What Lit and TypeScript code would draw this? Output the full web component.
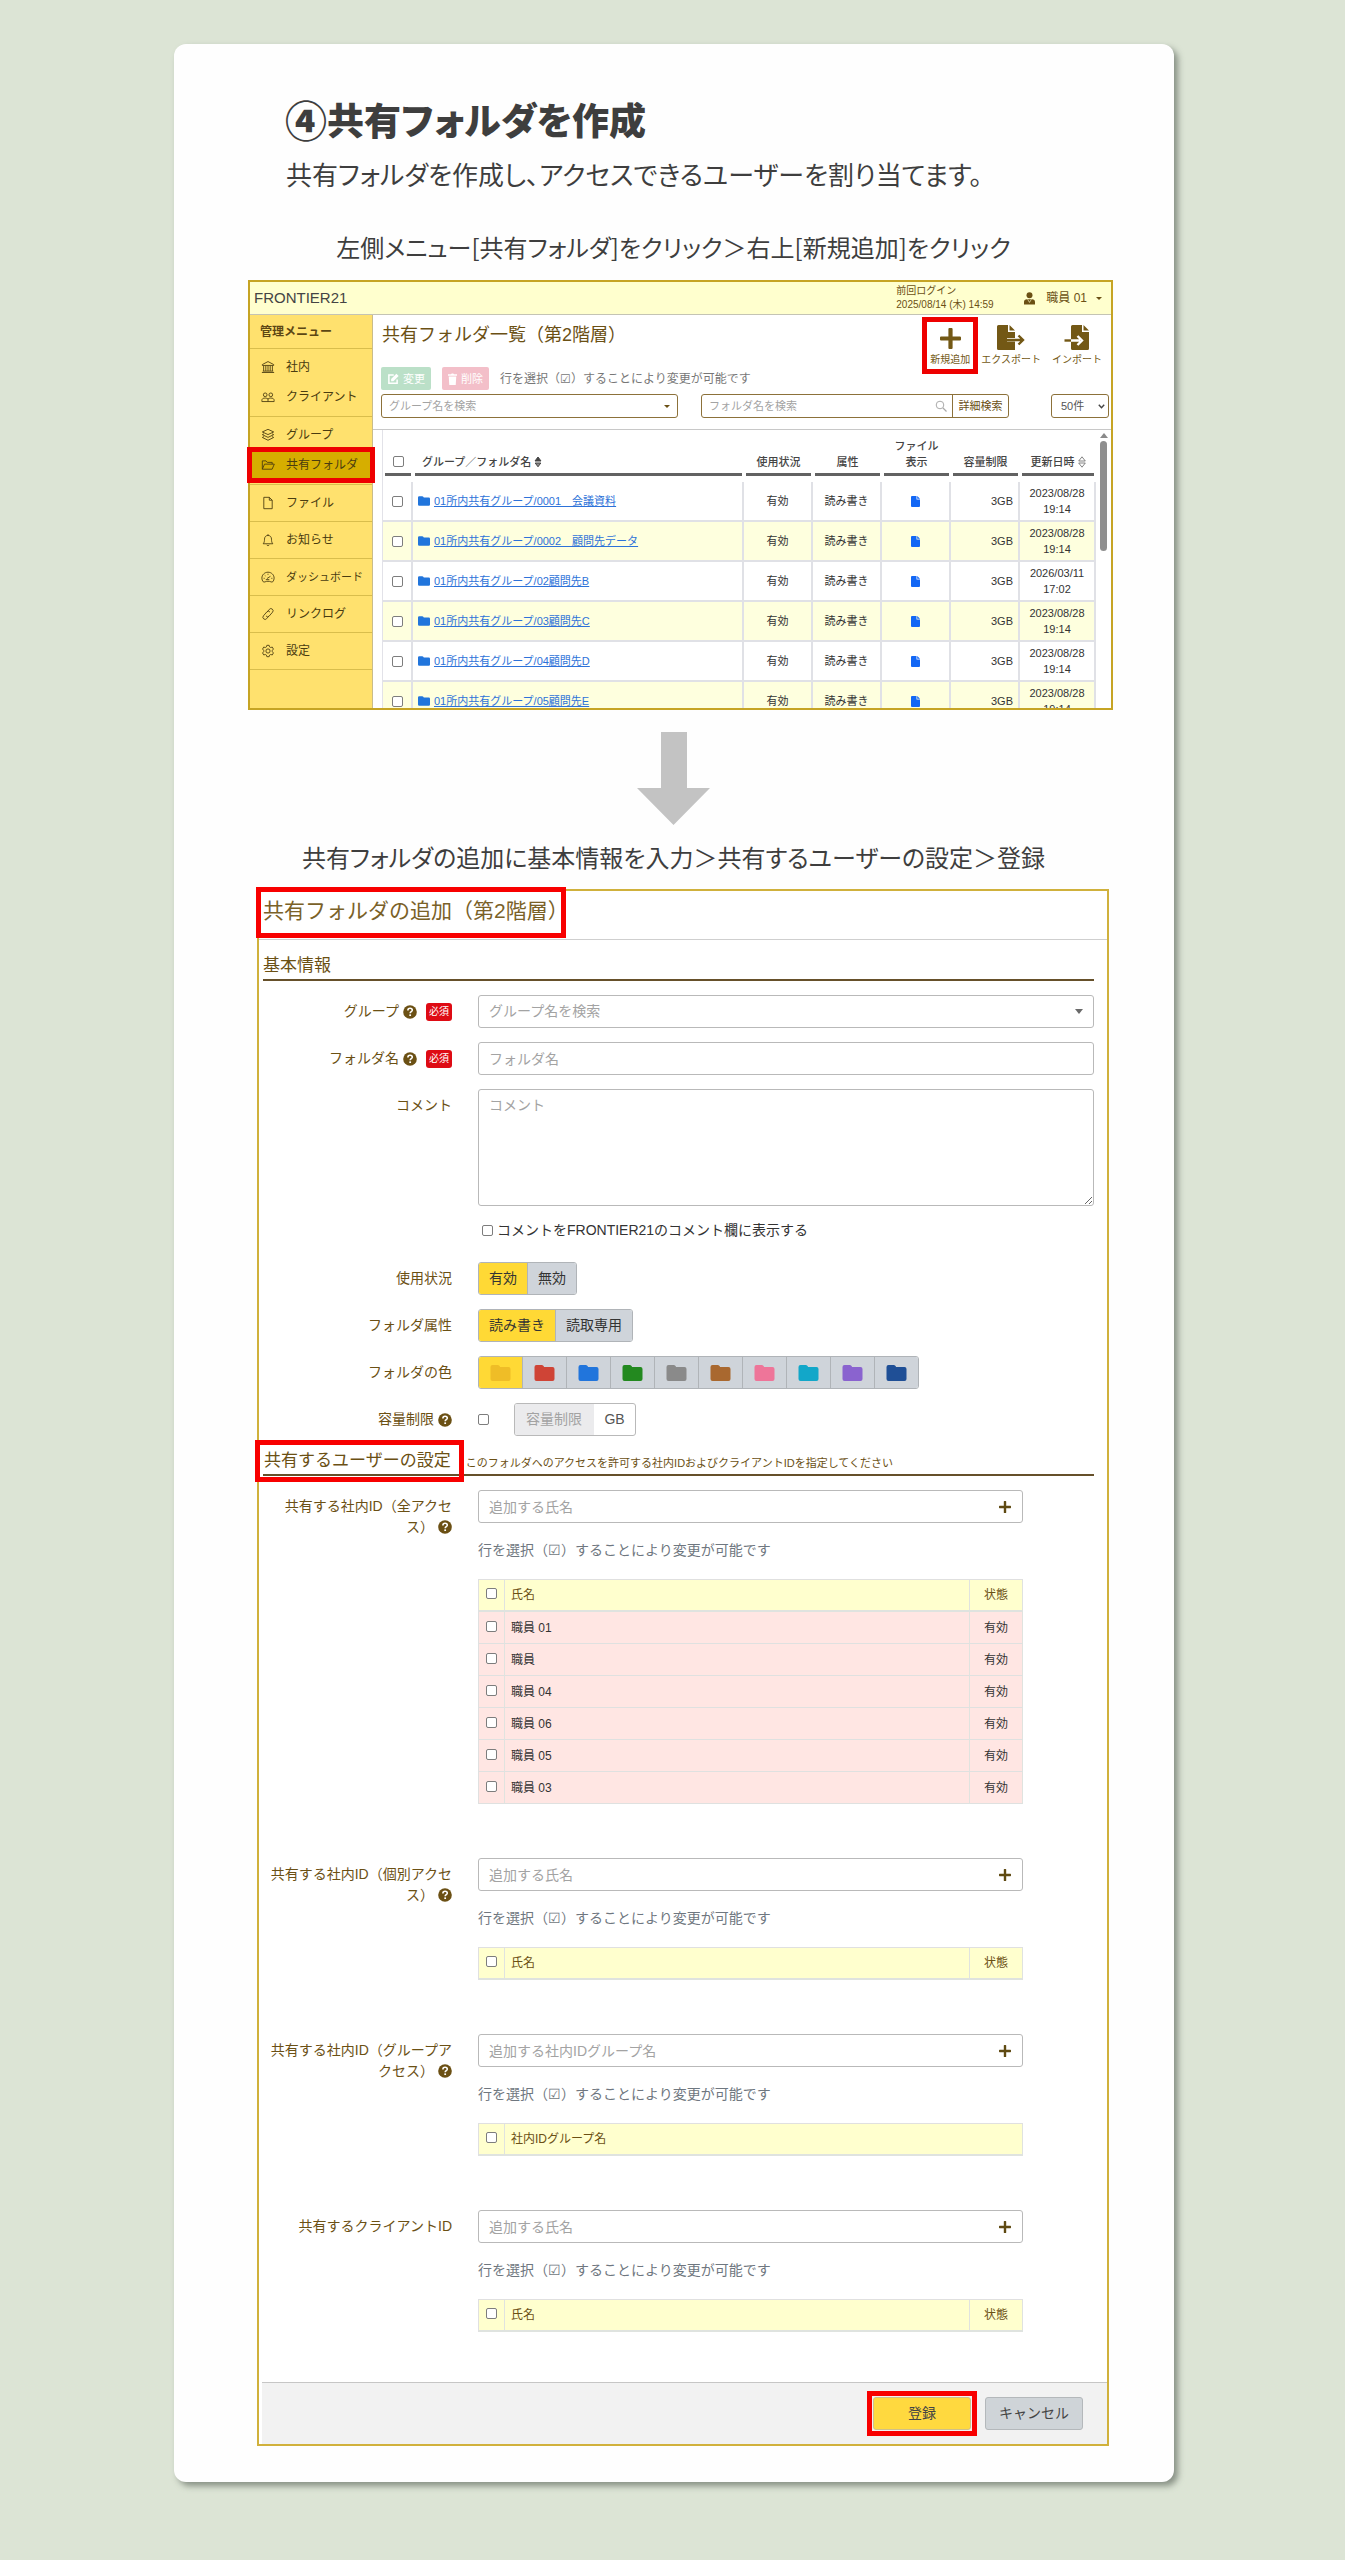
import { LitElement, html, css, svg, nothing } from "lit";
import { customElement, property } from "lit/decorators.js";

const stroke = (body: unknown) => html`<svg class="line-icon" viewBox="0 0 16 16" aria-hidden="true">${body}</svg>`;

const icons = {
  bank: stroke(svg`<path d="M1.5 5.2 8 1.8l6.500 3.400v1h-13zM3 6.500v6M5.500 6.500v6M10.500 6.500v6M13 6.500v6M8 6.500v6M2 12.700h12M1 14.300h14"/>`),
  people: stroke(svg`<circle cx="4.800" cy="5.500" r="2.100"/><circle cx="11.200" cy="5.500" r="2.100"/><path d="M1 13.200v-1.400c0-1.600 1.300-2.600 3.800-2.600 1.400 0 2.500.4 3.200 1.100.7-.7 1.800-1.100 3.200-1.100 2.500 0 3.800 1 3.800 2.600v1.400zM8 10.300v2.900"/>`),
  layers: stroke(svg`<path d="M8 1.500 14.500 4.500 8 7.500 1.500 4.500zM3.500 6.600l-2 1L8 10.700l6.500-3.100-2-1M3.500 9.800l-2 1L8 14l6.500-3.200-2-1"/>`),
  folder: stroke(svg`<path d="M1.500 12.800V3.300h4.200l1.500 1.700h5.600v2M1.500 12.800 4 7h11.200l-2.500 5.800z"/>`),
  file: stroke(svg`<path d="M3.200 1.500h6.300l3.300 3.300v9.700H3.200zM9.500 1.500v3.300h3.300"/>`),
  bell: stroke(svg`<path d="M2.500 12.300c1.200-1.300 1.500-3 1.500-5.300 0-2.400 1.500-4.200 4-4.200s4 1.800 4 4.200c0 2.300.3 4 1.500 5.300zM6.700 13.500c.2.700.7 1 1.300 1s1.100-.3 1.300-1M8 1.300v1.500"/>`),
  gauge: stroke(svg`<path d="M2.600 13.500C1.500 12.300 1 10.800 1 9.300 1 5.500 4.200 2.500 8 2.500s7 3 7 6.800c0 1.500-.5 3-1.600 4.200-.4.500-1.300.3-2.100 0-2-.8-4.600-.8-6.600 0-.8.3-1.700.5-2.100 0zM6.800 9.800l4-2.600M8 4.300v1.200M4.300 6l.8.700M3 9.500h1.200M11.800 9.500H13M5.500 11h4"/>`),
  link: stroke(svg`<path d="m7.200 5.400 2.300-2.700a2.400 2.400 0 0 1 3.700 3.200L9.400 10.300a2.400 2.400 0 0 1-3.600 0M8.800 10.600l-2.300 2.700a2.400 2.400 0 0 1-3.700-3.200l3.800-4.400a2.400 2.400 0 0 1 3.600 0"/>`),
  gear: stroke(svg`<circle cx="8" cy="8" r="2.400"/><path d="M6.700 1.500h2.600l.5 1.800 1.300.7 1.800-.5 1.300 2.300-1.300 1.400v1.600l1.300 1.400-1.300 2.300-1.800-.5-1.300.7-.5 1.800H6.700l-.5-1.800-1.300-.7-1.800.5-1.300-2.300 1.300-1.400V7.200L1.800 5.800l1.300-2.300 1.800.5 1.300-.7z"/>`),
};

const folderShape = html`<svg class="folder-shape" viewBox="0 0 20 16" aria-hidden="true"><path fill="currentColor" d="M2 0h5.200c.7 0 1.200.3 1.600.8l.9 1.300H18a2 2 0 0 1 2 2V14a2 2 0 0 1-2 2H2a2 2 0 0 1-2-2V2a2 2 0 0 1 2-2z"/></svg>`;
const plusShape = html`<svg class="plus" viewBox="0 0 20 20" aria-hidden="true"><path fill="currentColor" d="M8 1a1 1 0 0 1 1-1h2a1 1 0 0 1 1 1v7h7a1 1 0 0 1 1 1v2a1 1 0 0 1-1 1h-7v7a1 1 0 0 1-1 1H9a1 1 0 0 1-1-1v-7H1a1 1 0 0 1-1-1V9a1 1 0 0 1 1-1h7z"/></svg>`;
const helpShape = html`<svg class="help" viewBox="0 0 16 16" role="img" aria-label="ヘルプ"><circle cx="8" cy="8" r="7.800" fill="currentColor"/><path d="M5.600 6.200c0-1.500 1-2.400 2.500-2.400s2.500.9 2.500 2.200c0 1.700-2.400 1.700-2.400 3.500" fill="none" stroke="#fff" stroke-width="1.800"/><rect x="7.200" y="10.700" width="2" height="1.900" fill="#fff"/></svg>`;

const sidebarGroups = [
  [{ icon: icons.bank, text: "社内" }, { icon: icons.people, text: "クライアント" }],
  [{ icon: icons.layers, text: "グループ" }, { icon: icons.folder, text: "共有フォルダ", state: "current" }],
  [{ icon: icons.file, text: "ファイル" }],
  [{ icon: icons.bell, text: "お知らせ" }],
  [{ icon: icons.gauge, text: "ダッシュボード", state: "long" }],
  [{ icon: icons.link, text: "リンクログ" }],
  [{ icon: icons.gear, text: "設定" }],
] as { icon: unknown; text: string; state?: string }[][];

const folders = [
  { name: "01所内共有グループ/0001　会議資料", date: "2023/08/28", time: "19:14" },
  { name: "01所内共有グループ/0002　顧問先データ", date: "2023/08/28", time: "19:14" },
  { name: "01所内共有グループ/02顧問先B", date: "2026/03/11", time: "17:02" },
  { name: "01所内共有グループ/03顧問先C", date: "2023/08/28", time: "19:14" },
  { name: "01所内共有グループ/04顧問先D", date: "2023/08/28", time: "19:14" },
  { name: "01所内共有グループ/05顧問先E", date: "2023/08/28", time: "19:14" },
];

const folderColors = ["#efbd27", "#cf4436", "#2175dc", "#23891f", "#8a8a8a", "#a9682f", "#ee7599", "#12a7c9", "#8a63cf", "#1f4f96"];

const base = css`
  *, *::before, *::after { box-sizing: border-box; }
  :host { display: block; }
  h1, h2, h3, p, ul { margin: 0; padding: 0; font-weight: 400; }
  button, input, select, textarea { font: inherit; color: inherit; margin: 0; }
  button { padding: 0; border: 0; background: none; cursor: pointer; }
  svg { display: block; flex: none; }
  table { border-collapse: separate; border-spacing: 0; table-layout: fixed; width: 100%; }
  th { font-weight: 400; padding: 0; }
  td { padding: 0; }
  .check { appearance: none; display: block; width: 11px; height: 11px; border: 1px solid #7d7d7d; border-radius: 2px; background: #fff; flex: none; }
  .check:checked { background: #2175dc; }
  ::placeholder { color: #a3a3a3; opacity: 1; }
`;

@customElement("folder-list")
class FolderList extends LitElement {
  static styles = [base, css`
    :host { border: 2px solid #c6a424; background: #fff; font-size: 11px; line-height: 16px; color: #333; }
    .topbar { display: flex; align-items: center; height: 33px; padding: 0 9px 0 4px; background: #ffffce; border-bottom: 1px solid #c4c4b4; color: #6b5014; }
    .brand { flex: 1; font-size: 15px; color: #444; }
    .last-login { font-size: 10px; line-height: 14px; width: 128px; }
    .user { display: flex; align-items: center; font-size: 12px; gap: 11px; }
    .user-icon { width: 11px; height: 13px; }
    .caret { width: 0; border: 3px solid transparent; border-top-color: currentColor; border-bottom-width: 0; }
    .user .caret { margin-left: -2px; }
    .columns { display: flex; }
    .sidebar { width: 123px; flex: none; background: #ffe16e; border-right: 1px solid #c9bc8a; color: #4a3c10; font-size: 12px; }
    .menu-title { height: 34px; line-height: 35px; padding-left: 10px; font-size: 12px; font-weight: 700; border-bottom: 1px solid #d9bd4c; color: #5c4613; }
    .menu-group { list-style: none; border-bottom: 1px solid #d9bd4c; padding: 3px 0 4px; }
    .menu-group.single { padding: 3px 0; }
    .menu-item { display: flex; align-items: center; gap: 11px; height: 30px; padding-left: 11px; color: inherit; text-decoration: none; white-space: nowrap; }
    .menu-item.current { position: relative; z-index: 1; background: #d6ae00; outline: 5px solid #ee0000; outline-offset: -2px; }
    .menu-item.long { font-size: 11px; }
    .line-icon { width: 14px; height: 14px; fill: none; stroke: currentColor; stroke-width: 1; }
    .main { flex: 1; min-width: 0; }
    .head { padding: 0 2px 11px 8px; border-bottom: 1px solid #c8c8c8; }
    .head-top { display: flex; justify-content: space-between; height: 79px; }
    .title { font-size: 18px; line-height: 41px; color: #6b5014; padding-left: 1px; }
    .bulk { display: flex; align-items: center; margin-top: 11px; }
    .bulk-button { display: flex; align-items: center; gap: 4px; height: 23px; padding: 0 6px; border-radius: 2px; color: #fff; }
    .bulk-button svg { width: 12px; height: 12px; }
    .bulk-button .bin { width: 9px; }
    .edit { background: #bbe0c8; margin-right: 11px; }
    .delete { background: #f3bfc9; margin-right: 11px; }
    .hint { font-size: 12px; color: #777; }
    .actions { display: flex; align-items: flex-start; gap: 11px; padding: 10px 7px 0 0; color: #735815; }
    .action { display: flex; flex-direction: column; align-items: center; gap: 3px; font-size: 10px; line-height: 12px; white-space: nowrap; }
    .action-icon { display: flex; align-items: center; height: 26px; }
    .action-icon .plus { width: 21px; height: 21px; }
    .action-icon .doc { width: 28px; height: 26px; }
    .action.marked { outline: 5px solid #ee0000; outline-offset: 3px; }
    .filters { display: flex; gap: 23px; height: 24px; color: #6b5014; }
    .field { display: flex; min-width: 0; position: relative; align-items: center; border: 1px solid #8c713a; border-radius: 3px; background: #fff; }
    .field select, .field input { appearance: none; width: 100%; height: 22px; border: 0; background: none; padding: 0 7px; outline: 0; }
    .field .end { position: absolute; right: 7px; pointer-events: none; }
    .group-field { flex: 297 1 0; }
    .group-field select { color: #a3a3a3; }
    .search-field { flex: 308 1 0; }
    .search-icon { width: 12px; height: 12px; flex: none; color: #aaa; margin-right: 5px; }
    .detail { width: 56px; height: 22px; flex: none; border-left: 1px solid #8c713a; }
    .count-field { width: 58px; flex: none; margin-left: 19px; color: #555; }
    .count-field select { padding-left: 9px; }
    .count-field .end { right: 3px; width: 7px; height: 5px; }
    .scroll { display: flex; height: 278px; overflow: hidden; padding-left: 9px; }
    .table-box { flex: 1; min-width: 0; border-left: 1px solid #e2e2e8; }
    .c-check { width: 30px; }
    .c-mid { width: 69px; }
    .c-date { width: 76px; }
    .th-box { display: flex; align-items: flex-end; justify-content: center; height: 46px; margin: 0 2px 6px; padding-bottom: 3px; border-bottom: 3px solid #626262; font-weight: 500; color: #444; gap: 3px; }
    .th-box .check { margin-bottom: 3px; }
    .th-box.start { justify-content: flex-start; padding-left: 7px; }
    .sort { width: 8px; height: 12px; margin-bottom: 2px; }
    .row td { height: 40px; text-align: center; border-right: 2px solid #e0e1e6; border-bottom: 2px solid #e0e1e6; }
    .row:nth-child(even) td { background: #feffde; }
    .row .check { margin: 0 auto; }
    .row .name { text-align: left; padding-left: 5px; }
    .name-box { display: flex; align-items: center; gap: 4px; white-space: nowrap; }
    .name-box .folder-shape { width: 12px; height: 10px; color: #2175dc; }
    .name-box a { color: #2d72d9; }
    .row .size { text-align: right; padding-right: 5px; }
    .file-mark { width: 9px; height: 11px; margin: 0 auto; }
    .scrollbar { width: 15px; flex: none; display: flex; flex-direction: column; align-items: center; gap: 3px; padding-top: 3px; }
    .scroll-up { border: 4px solid transparent; border-bottom: 5px solid #8a8a8a; border-top: 0; }
    .thumb { width: 7px; height: 110px; border-radius: 4px; background: #8f8f8f; }
  `];

  render() {
    const mid = (text: string) => html`<th scope="col"><div class="th-box">${text}</div></th>`;
    return html`
      <div class="topbar">
        <div class="brand">FRONTIER21</div>
        <div class="last-login">前回ログイン<br>2025/08/14 (木) 14:59</div>
        <button class="user" type="button">
          <svg class="user-icon" viewBox="0 0 14 16" aria-hidden="true"><circle cx="7" cy="4" r="3.800" fill="currentColor"/><path fill="currentColor" d="M0 15.500v-3.300c0-2 1.500-3.400 3.600-3.400h6.800c2.100 0 3.600 1.400 3.600 3.400v3.300z"/><path d="M4.600 9 7 13l2.400-4" stroke="#ffffce" stroke-width=".8" fill="none"/></svg>
          <span>職員 01</span><span class="caret"></span>
        </button>
      </div>
      <div class="columns">
        <nav class="sidebar" aria-label="管理メニュー">
          <div class="menu-title">管理メニュー</div>
          ${sidebarGroups.map((group) => html`<ul class="menu-group ${group.length === 1 ? "single" : ""}">${group.map((item) => html`
            <li><a class="menu-item ${item.state ?? ""}" href="#">${item.icon}<span>${item.text}</span></a></li>`)}</ul>`)}
        </nav>
        <div class="main">
          <div class="head">
            <div class="head-top">
              <div>
                <h2 class="title">共有フォルダ一覧（第2階層）</h2>
                <div class="bulk">
                  <button class="bulk-button edit" type="button"><svg viewBox="0 0 16 16" aria-hidden="true"><path d="M9 2.500H2.500v11h11V8.500" fill="none" stroke="currentColor" stroke-width="2"/><path fill="currentColor" d="M5.500 8 12.500 1 15.500 4 8.500 11H5.500z"/></svg>変更</button>
                  <button class="bulk-button delete" type="button"><svg class="bin" viewBox="2 0 12 16" aria-hidden="true"><path fill="currentColor" d="M2 1.500h4l1-1h2l1 1h4v2H2zM3 4.500h10l-.7 11.500H3.700z"/></svg>削除</button>
                  <span class="hint">行を選択（☑）することにより変更が可能です</span>
                </div>
              </div>
              <div class="actions">
                <button class="action marked" type="button"><span class="action-icon">${plusShape}</span>新規追加</button>
                <button class="action" type="button"><span class="action-icon"><svg class="doc" viewBox="0 0 28 26" aria-hidden="true"><path fill="currentColor" d="M1.500 0H11v7h7v6h-8v3.500h8V25H1.500A1.500 1.500 0 0 1 0 23.500v-22A1.500 1.500 0 0 1 1.500 0zM12.500 0 18 5.500h-5.500z"/><path d="M10 15h15M21.500 10.500 26 15l-4.500 4.500" fill="none" stroke="currentColor" stroke-width="2.400"/></svg></span>エクスポート</button>
                <button class="action" type="button"><span class="action-icon"><svg class="doc" viewBox="0 0 28 26" aria-hidden="true"><path fill="currentColor" d="M9.500 0H19v7h7v16.500a1.500 1.500 0 0 1-1.500 1.500h-15A1.500 1.500 0 0 1 8 23.500v-22A1.500 1.500 0 0 1 9.500 0zM20.500 0 26 5.500h-5.500z"/><path d="M8 15.500h9M14.500 11l4.500 4.500-4.500 4.500" fill="none" stroke="#fff" stroke-width="2.400"/><path d="M1.500 15.500H8" stroke="currentColor" stroke-width="2.400"/></svg></span>インポート</button>
              </div>
            </div>
            <div class="filters">
              <div class="field group-field">
                <select aria-label="グループ名を検索"><option>グループ名を検索</option></select>
                <span class="caret end"></span>
              </div>
              <div class="field search-field">
                <input type="text" aria-label="フォルダ名を検索" placeholder="フォルダ名を検索">
                <svg class="search-icon" viewBox="0 0 12 12" aria-hidden="true"><circle cx="5" cy="5" r="3.800" fill="none" stroke="currentColor"/><path d="m8 8 3.500 3.500" stroke="currentColor" stroke-width="1.300"/></svg>
                <button class="detail" type="button">詳細検索</button>
              </div>
              <div class="field count-field">
                <select aria-label="表示件数"><option>50件</option></select>
                <svg class="end" viewBox="0 0 7 5" aria-hidden="true"><path d="m.8.800 2.700 3 2.700-3" fill="none" stroke="#444" stroke-width="1.400"/></svg>
              </div>
            </div>
          </div>
          <div class="scroll">
            <div class="table-box">
              <table>
                <colgroup><col class="c-check"><col><col class="c-mid"><col class="c-mid"><col class="c-mid"><col class="c-mid"><col class="c-date"></colgroup>
                <thead><tr>
                  <th scope="col"><div class="th-box"><input class="check" type="checkbox" aria-label="すべて選択"></div></th>
                  <th scope="col"><div class="th-box start">グループ／フォルダ名<svg class="sort" viewBox="0 0 8 12" aria-hidden="true"><path fill="#444" stroke="#444" d="M4 1 7 5H1z"/><path d="M1.200 7h5.600L4 10.800z" fill="#888" stroke="#444"/></svg></div></th>
                  ${mid("使用状況")}${mid("属性")}
                  <th scope="col"><div class="th-box"><span>ファイル<br>表示</span></div></th>
                  ${mid("容量制限")}
                  <th scope="col"><div class="th-box">更新日時<svg class="sort" viewBox="0 0 8 12" aria-hidden="true"><path d="M4 .8 7.300 5H.7zM.7 7h6.600L4 11.200z" fill="none" stroke="#666" stroke-width=".8"/></svg></div></th>
                </tr></thead>
                <tbody>${folders.map((f) => html`<tr class="row">
                  <td><input class="check" type="checkbox" aria-label="${f.name}を選択"></td>
                  <td class="name"><div class="name-box">${folderShape}<a href="#">${f.name}</a></div></td>
                  <td>有効</td><td>読み書き</td>
                  <td><svg class="file-mark" viewBox="0 0 9 11" role="img" aria-label="ファイル"><path fill="#1267f5" d="M1 0h4.500v3.500H9V10a1 1 0 0 1-1 1H1a1 1 0 0 1-1-1V1a1 1 0 0 1 1-1zM6.200 0 9 2.800H6.200z"/></svg></td>
                  <td class="size">3GB</td>
                  <td>${f.date}<br>${f.time}</td>
                </tr>`)}</tbody>
              </table>
            </div>
            <div class="scrollbar" aria-hidden="true"><div class="scroll-up"></div><div class="thumb"></div></div>
          </div>
        </div>
      </div>`;
  }
}

@customElement("member-picker")
class MemberPicker extends LitElement {
  @property() heading = "";
  @property() placeholder = "";
  @property() column = "氏名";
  @property({ type: Boolean }) help = false;
  @property({ attribute: false }) members: string[] = [];

  static styles = [base, css`
    :host { display: grid; grid-template-columns: 189px minmax(0, 1fr); column-gap: 26px; }
    .label { text-align: right; line-height: 21px; padding: 6px 0 0 5px; color: #6b5014; }
    .help { display: inline-block; width: 14px; height: 14px; vertical-align: -2px; margin-left: 4px; }
    .content { margin-right: 71px; }
    .adder { display: flex; align-items: center; height: 33px; border: 1px solid #b9b9b9; border-radius: 3px; }
    .adder input { flex: 1; min-width: 0; height: 31px; border: 0; background: none; padding: 0 10px; outline: 0; }
    .add { width: 35px; height: 31px; display: flex; align-items: center; justify-content: center; color: #5f4a12; }
    .plus { width: 12px; height: 12px; }
    .hint { margin: 16px 0 18px; line-height: 22px; color: #6f7780; }
    table { font-size: 12px; line-height: 16px; border-left: 1px solid #e0e0e0; border-top: 1px solid #e0e0e0; }
    .c-check { width: 26px; }
    .c-state { width: 53px; }
    th { height: 32px; background: #ffffce; color: #6b5014; border-bottom: 2px solid #dfe3df; }
    td { height: 32px; background: #ffe6e3; color: #333; border-bottom: 1px solid #dfe1e0; }
    th, td { border-right: 1px solid #e0e3df; text-align: left; padding: 0 6px; }
    .box { padding: 0 0 3px 7px; }
    .state { text-align: center; padding: 0; }
  `];

  render() {
    const withState = this.column === "氏名";
    return html`
      <label class="label" for="add">${this.heading}${this.help ? helpShape : nothing}</label>
      <div class="content">
        <div class="adder">
          <input id="add" type="text" placeholder=${this.placeholder}>
          <button class="add" type="button" aria-label="追加">${plusShape}</button>
        </div>
        <p class="hint">行を選択（☑）することにより変更が可能です</p>
        <table>
          <colgroup><col class="c-check"><col>${withState ? html`<col class="c-state">` : nothing}</colgroup>
          <thead><tr>
            <th class="box" scope="col"><input class="check" type="checkbox" aria-label="すべて選択"></th>
            <th scope="col">${this.column}</th>
            ${withState ? html`<th class="state" scope="col">状態</th>` : nothing}
          </tr></thead>
          <tbody>${this.members.map((m) => html`<tr>
            <td class="box"><input class="check" type="checkbox" aria-label="${m}を選択"></td>
            <td>${m}</td><td class="state">有効</td></tr>`)}</tbody>
        </table>
      </div>`;
  }
}

@customElement("folder-form")
class FolderForm extends LitElement {
  static styles = [base, css`
    :host { border: 2px solid #d0b13c; background: #fff; font-size: 14px; line-height: 21px; color: #333; }
    .header { height: 49px; padding: 1px 0 0 2px; border-bottom: 1px solid #cfcfcf; }
    .title { width: 300px; padding: 0 0 3px 2px; font-size: 21px; line-height: 38px; white-space: nowrap; color: #7a6128; outline: 5px solid #f80000; }
    .body { display: flex; flex-direction: column; gap: 14px; padding: 13px 13px 50px 4px; }
    .section { display: flex; align-items: center; border-bottom: 2px solid #66502a; font-size: 17px; line-height: 26px; color: #6b5014; }
    .section-title { font-size: 17px; }
    .second { margin-top: -2px; }
    .marked { outline: 5px solid #f80000; outline-offset: 3px; padding: 0 5px 0 1px; margin-right: 10px; }
    .note { font-size: 11px; line-height: 22px; padding-top: 4px; }
    .field-row { display: grid; grid-template-columns: 189px minmax(0, 1fr); column-gap: 26px; }
    .label { display: flex; justify-content: flex-end; align-items: center; height: 33px; color: #6b5014; }
    .help { width: 14px; height: 14px; margin-left: 4px; }
    .badge { margin-left: 9px; width: 26px; height: 18px; border-radius: 3px; background: #de0b14; color: #fff; font-size: 10px; line-height: 18px; text-align: center; }
    .input { display: block; appearance: none; width: 100%; height: 33px; border: 1px solid #b9b9b9; border-radius: 3px; background: #fff; padding: 0 10px; outline: 0; }
    .select-box { position: relative; }
    .select-box .input { color: #a3a3a3; }
    .caret { position: absolute; right: 11px; top: 14px; border: 4px solid transparent; border-top: 5px solid #6a6a6a; border-bottom: 0; pointer-events: none; }
    .area { height: 117px; padding: 5px 10px; resize: vertical; }
    .inline-check { display: flex; align-items: center; gap: 4px; margin: 14px 0 8px; padding-left: 4px; line-height: 20px; }
    .segments { display: flex; width: max-content; height: 33px; border: 1px solid #b0b4b8; border-radius: 3px; overflow: hidden; }
    .segment { position: relative; display: flex; align-items: center; justify-content: center; background: #cfd4da; padding: 0 10px; border-left: 1px solid #b0b4b8; }
    .segment:first-child { border-left: 0; }
    .segment.on { background: #ffd935; }
    .segment input { position: absolute; inset: 0; opacity: 0; }
    .segment .folder-shape { width: 23px; height: 16px; }
    .limit { display: flex; align-items: center; gap: 25px; }
    .limit-box { display: flex; height: 33px; border: 1px solid #b9b9b9; border-radius: 3px; overflow: hidden; color: #555; }
    .limit-box input { width: 79px; border: 0; padding: 0 11px; background: #ebebed; }
    .limit-unit { width: 41px; line-height: 31px; text-align: center; }
    .pickers { display: flex; flex-direction: column; gap: 54px; }
    .footer { display: flex; justify-content: flex-end; gap: 14px; margin-left: 3px; padding: 14px 24px 14px 0; border-top: 1px solid #c6c6c6; background: #f2f2f2; }
    .button { display: block; width: 98px; height: 33px; border: 1px solid #b4b8bb; border-radius: 3px; background: #cfd4d8; color: #444; }
    .primary { background: #ffd93f; border-color: #cfc08a; }
    .frame { outline: 5px solid #f80000; outline-offset: 1px; }
  `];

  private segments(name: string, options: unknown[]) {
    return html`<div class="segments" role="radiogroup" aria-label=${name}>${options.map((o, i) => html`
      <label class="segment ${i === 0 ? "on" : ""}"><input type="radio" name=${name} aria-label="${name} ${i + 1}" ?checked=${i === 0}>${o}</label>`)}</div>`;
  }

  render() {
    const required = html`<span class="badge">必須</span>`;
    return html`
      <div class="header"><h2 class="title">共有フォルダの追加（第2階層）</h2></div>
      <div class="body">
        <div class="section"><h3 class="section-title">基本情報</h3></div>
        <div class="field-row">
          <label class="label" for="group">グループ${helpShape}${required}</label>
          <div class="select-box"><select class="input" id="group"><option>グループ名を検索</option></select><span class="caret"></span></div>
        </div>
        <div class="field-row">
          <label class="label" for="name">フォルダ名${helpShape}${required}</label>
          <input class="input" id="name" type="text" placeholder="フォルダ名">
        </div>
        <div class="field-row">
          <label class="label" for="comment">コメント</label>
          <div>
            <textarea class="input area" id="comment" placeholder="コメント"></textarea>
            <label class="inline-check"><input class="check" type="checkbox">コメントをFRONTIER21のコメント欄に表示する</label>
          </div>
        </div>
        <div class="field-row"><span class="label">使用状況</span>${this.segments("使用状況", ["有効", "無効"])}</div>
        <div class="field-row"><span class="label">フォルダ属性</span>${this.segments("フォルダ属性", ["読み書き", "読取専用"])}</div>
        <div class="field-row"><span class="label">フォルダの色</span>${this.segments("フォルダの色", folderColors.map((c) => html`<span style="color:${c}">${folderShape}</span>`))}</div>
        <div class="field-row">
          <label class="label" for="limit">容量制限${helpShape}</label>
          <div class="limit">
            <input class="check" type="checkbox" aria-label="容量制限を使う">
            <div class="limit-box"><input id="limit" type="text" placeholder="容量制限" disabled><span class="limit-unit">GB</span></div>
          </div>
        </div>
        <div class="section second"><h3 class="section-title marked">共有するユーザーの設定</h3><span class="note">このフォルダへのアクセスを許可する社内IDおよびクライアントIDを指定してください</span></div>
        <div class="pickers">
          <member-picker help heading="共有する社内ID（全アクセス）" placeholder="追加する氏名" .members=${["職員 01", "職員", "職員 04", "職員 06", "職員 05", "職員 03"]}></member-picker>
          <member-picker help heading="共有する社内ID（個別アクセス）" placeholder="追加する氏名"></member-picker>
          <member-picker help heading="共有する社内ID（グループアクセス）" placeholder="追加する社内IDグループ名" column="社内IDグループ名"></member-picker>
          <member-picker heading="共有するクライアントID" placeholder="追加する氏名"></member-picker>
        </div>
      </div>
      <div class="footer">
        <span class="frame"><button class="button primary" type="button">登録</button></span>
        <button class="button" type="button">キャンセル</button>
      </div>`;
  }
}

@customElement("app-root")
class AppRoot extends LitElement {
  static styles = [base, css`
    :host { min-height: 100vh; padding: 44px 171px 78px 174px; background: #dce4d5; font-family: "Liberation Sans", "Noto Sans CJK JP", sans-serif; color: #3e3e3e; }
    .card { display: flex; flex-direction: column; padding: 49px 61px 36px 74px; border-radius: 12px; background: #fefefe; box-shadow: 4px 4px 6px rgba(90, 100, 90, 0.65); }
    .heading, .lead, .caption { font-family: "Noto Sans CJK JP", sans-serif; font-feature-settings: "palt"; }
    .heading { display: flex; align-items: center; padding-left: 37px; font-size: 37px; line-height: 52px; font-weight: 900; }
    .number { font-size: 42px; }
    .lead { margin-top: 11px; padding-left: 38px; font-size: 26px; line-height: 36px; }
    .caption { padding-right: 14px; font-size: 24px; line-height: 36px; text-align: center; }
    .first { margin: 37px 0 15px; }
    .arrow { box-sizing: content-box; width: 73px; height: 93px; margin: 22px auto 14px; padding-right: 14px; }
    .form { margin: 14px 4px 0 9px; }
  `];

  render() {
    return html`
      <main class="card">
        <h1 class="heading"><span class="number">④</span><span>共有フォルダを作成</span></h1>
        <p class="lead">共有フォルダを作成し、アクセスできるユーザーを割り当てます。</p>
        <p class="caption first">左側メニュー[共有フォルダ]をクリック＞右上[新規追加]をクリック</p>
        <folder-list></folder-list>
        <svg class="arrow" viewBox="0 0 73 93" aria-hidden="true"><path fill="#c3c3c3" d="M24 0h26v56h23L36.500 93 0 56h24z"/></svg>
        <p class="caption">共有フォルダの追加に基本情報を入力＞共有するユーザーの設定＞登録</p>
        <folder-form class="form"></folder-form>
      </main>`;
  }
}
